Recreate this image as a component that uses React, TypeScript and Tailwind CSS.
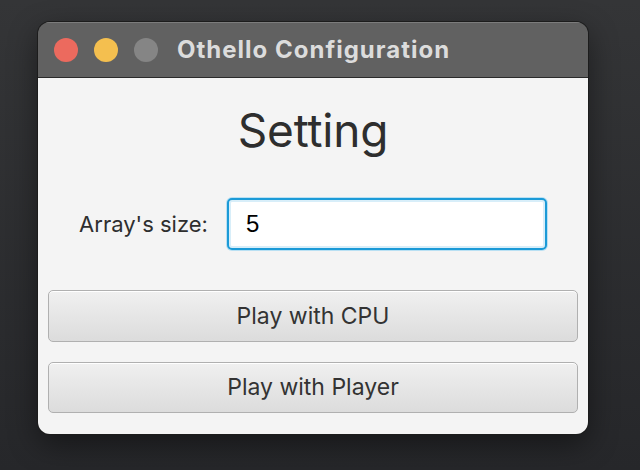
import React from 'react'

function TrafficLights() {
  return (
    <div className="flex items-center gap-[16px]">
      <span className="h-[24px] w-[24px] rounded-full bg-[#ec6a5e]" />
      <span className="h-[24px] w-[24px] rounded-full bg-[#f4bf4f]" />
      <span className="h-[24px] w-[24px] rounded-full bg-[#858585]" />
    </div>
  )
}

export default function App() {
  return (
    <div
      className="h-[470px] w-[640px] overflow-hidden bg-gradient-to-b from-[#343537] to-[#26272a] pl-[38px] pt-[22px]"
      style={{ fontFamily: 'Inter, "Noto Sans", sans-serif' }}
    >
      <div className="flex h-[412px] w-[550px] flex-col overflow-hidden rounded-[12px] shadow-[0_0_0_1px_#1c1c1c,0_10px_30px_rgba(0,0,0,0.45)]">
        <div className="flex h-[56px] items-center gap-[19px] border-b border-[#2a2a2a] bg-[#616161] pl-[16px] shadow-[inset_0_1px_0_#7c7c7c]">
          <TrafficLights />
          <span className="text-[24px] font-bold tracking-[1px] text-[#dcdcdc]">Othello Configuration</span>
        </div>

        <div className="flex flex-1 flex-col bg-[#f4f4f4] px-[10px] pt-[26px]">
          <h1 className="text-center text-[46px] leading-[52px] font-normal tracking-[-0.2px] text-[#2e2e2e]">
            Setting
          </h1>

          <div className="mt-[42px] flex items-center justify-center gap-[19px]">
            <span className="text-[22px] tracking-[0px] text-[#2e2e2e]">Array's size:</span>
            <div className="flex h-[52px] w-[320px] items-center rounded-[5px] border-2 border-[#1b9ad7] bg-white pl-[17px] shadow-[inset_0_0_0_2px_#d8eef9,0_0_0_1px_#b9e0f3]">
              <span
                className="text-[24px] text-black"
                style={{ fontFamily: '"Liberation Sans", Arial, sans-serif' }}
              >
                5
              </span>
            </div>
          </div>

          <button className="mt-[40px] h-[52px] w-full rounded-[5px] border border-[#b0b0b0] bg-gradient-to-b from-[#f0f0f0] to-[#dcdcdc] text-[23px] tracking-[0px] text-[#333333] shadow-[inset_0_1px_0_#ffffff]">
            Play with CPU
          </button>
          <button className="mt-[20px] h-[51px] w-full rounded-[5px] border border-[#b0b0b0] bg-gradient-to-b from-[#f0f0f0] to-[#dcdcdc] text-[23px] tracking-[0px] text-[#333333] shadow-[inset_0_1px_0_#ffffff]">
            Play with Player
          </button>
        </div>
      </div>
    </div>
  )
}
